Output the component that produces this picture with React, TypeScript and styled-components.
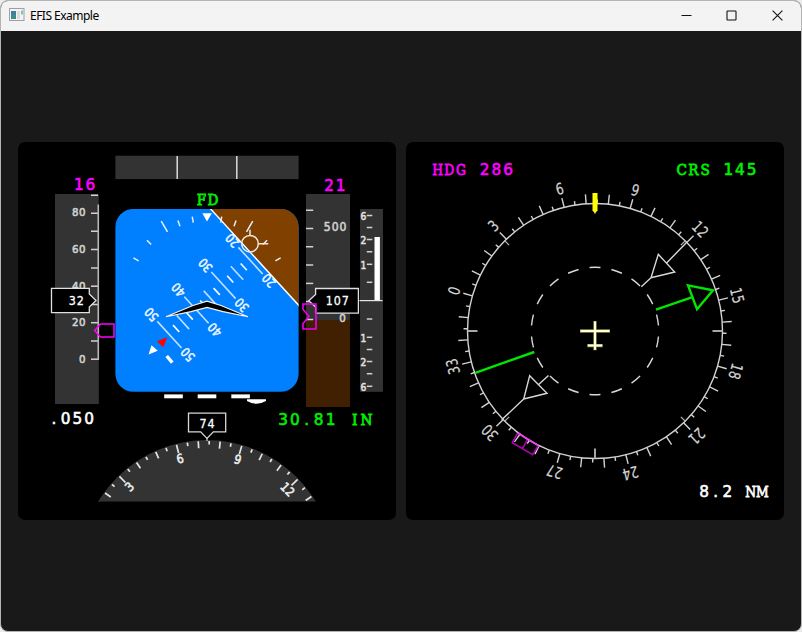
import React from "react";
import styled, { createGlobalStyle } from "styled-components";

const GlobalStyle = createGlobalStyle`
  * { box-sizing: border-box; }
  body { margin: 0; background: #ebebeb; overflow: hidden; }
`;

const Window = styled.div`
  display: flex;
  flex-direction: column;
  width: 802px;
  height: 632px;
  border: 1px solid #b4b4b4;
  border-radius: 8px;
  overflow: hidden;
  background: #191919;
`;

const TitleBar = styled.header`
  display: flex;
  align-items: center;
  flex: none;
  height: 30px;
  padding: 0 1px 0 8px;
  background: #f3f3f3;
`;

const AppIcon = styled.svg`
  flex: none;
  width: 16px;
  height: 16px;
  margin-right: 5px;
`;

const Title = styled.h1`
  flex: 1;
  margin: 0;
  font: 400 12px/30px "Noto Sans", sans-serif;
  letter-spacing: -0.52px;
  color: #000;
`;

const CaptionButton = styled.button`
  display: flex;
  align-items: center;
  justify-content: center;
  width: 45.5px;
  height: 30px;
  padding: 0 0 1px;
  border: 0;
  background: transparent;

  svg {
    width: 11px;
    height: 11px;
    fill: none;
    stroke: #111;
  }
`;

const Body = styled.main`
  display: flex;
  flex: 1;
  align-items: flex-start;
  gap: 10px;
  padding: 111px 17px 0;
`;

const Panel = styled.section`
  width: 378px;
  height: 378px;
  border-radius: 7px;
  background: #000;
  overflow: hidden;
`;

const Drawing = styled.svg`
  display: block;
  width: 378px;
  height: 378px;
`;

const Label = styled.text<{ $face?: string; $weight?: number }>`
  font-family: ${(p) => p.$face ?? '"DejaVu Sans"'}, sans-serif;
  font-weight: ${(p) => p.$weight ?? 400};
  text-anchor: middle;
  white-space: pre;
`;

const SERIF = '"DejaVu Serif"';
const GREY = "#d2d2d2";
const MAGENTA = "#ff00ff";
const GREEN = "#00f000";

type GlyphProps = {
  text: string;
  x: number;
  y: number;
  pitch: number;
  size: number;
  sx?: number;
  fill?: string;
  face?: string;
  weight?: number;
  edge?: number;
};

/* Fixed-pitch text: x is the centre of the first character, y the baseline. */
function Glyphs({ text, x, y, pitch, size, sx = 1, fill = "#fff", face, weight, edge = 0 }: GlyphProps) {
  const xs = text.split("").map((_, i) => (i * pitch) / sx).join(" ");
  return (
    <Label
      $face={face}
      $weight={weight}
      fontSize={size}
      fill={fill}
      stroke={edge ? fill : "none"}
      strokeWidth={edge}
      x={xs}
      y={0}
      transform={`translate(${x} ${y}) scale(${sx} 1)`}
    >
      {text}
    </Label>
  );
}

type ReadoutProps = { text: string; x: number; y: number; fill?: string; pitch?: number; sx?: number };
const Digits = ({ pitch = 11.7, ...p }: ReadoutProps) => <Glyphs sx={0.98} {...p} pitch={pitch} size={15.6} edge={0.6} />;
const Letters = ({ pitch = 11.7, ...p }: ReadoutProps) => <Glyphs sx={0.92} {...p} pitch={pitch} size={14.8} face={SERIF} edge={0.75} />;
const BoxDigits = (p: { text: string; x: number; y: number }) => <Glyphs {...p} pitch={8} size={12.4} sx={0.9} edge={0.3} />;

const polar = (cx: number, cy: number, r: number, deg: number) => {
  const a = (deg * Math.PI) / 180;
  return [cx + r * Math.sin(a), cy - r * Math.cos(a)];
};

type TickProps = { cx: number; cy: number; deg: number; r1: number; r2: number; color?: string; width?: number };
function Tick({ cx, cy, deg, r1, r2, color = GREY, width = 1.3 }: TickProps) {
  const [x1, y1] = polar(cx, cy, r1, deg);
  const [x2, y2] = polar(cx, cy, r2, deg);
  return <line x1={x1} y1={y1} x2={x2} y2={y2} stroke={color} strokeWidth={width} />;
}

type LadderProps = { ys: number[]; x1: number; x2: number };
const Scale = ({ ys, x1, x2 }: LadderProps) => (
  <g stroke={GREY} strokeWidth={1.5}>
    {ys.map((y) => (
      <line key={y} x1={x1} x2={x2} y1={y} y2={y} />
    ))}
  </g>
);

const ROLL = 227.6;
const PITCH = 36.1;
const PITCH_MARKS = [20, 22.5, 25, 27.5, 30, 32.5, 35, 37.5, 40, 42.5, 45, 47.5, 50];

function Attitude() {
  const ladder = { pitch: 6.8, size: 12.8, sx: 0.82, fill: "#f0f7ff", edge: 0.5 };
  return (
    <g clipPath="url(#adi)">
      <rect x={115} y={208} width={184} height={184} fill="#0080ff" />
      <path d="M210.7 209 L300 306.7 V208 H209.8 Z" fill="#804000" />
      <line x1={209.8} y1={208} x2={300} y2={306.7} stroke="#fff" strokeWidth={1.4} />
      <g transform={`translate(207 300.4) rotate(${ROLL})`}>
        {PITCH_MARKS.map((p) => {
          const y = -(p - PITCH) * 3.66;
          const main = p % 10 === 0;
          const half = main ? 18 : p % 5 === 0 ? 9.2 : 4.6;
          return (
            <g key={p}>
              <line x1={-half} x2={half} y1={y} y2={y} stroke={p % 5 ? "#fff" : "#c4e0ff"} strokeWidth={1.6} />
              {main && <Glyphs {...ladder} text={String(p)} x={-30.4} y={y + 4.7} />}
              {main && <Glyphs {...ladder} text={String(p)} x={23.6} y={y + 4.7} />}
            </g>
          );
        })}
      </g>
      {[-60, -45, -30, -20, -10, 10, 20, 30, 45, 60].map((d) => (
        <Tick key={d} cx={207} cy={300.4} deg={d} r1={79} r2={Math.abs(d) === 30 ? 91.5 : 85} color="#e6f0fa" width={1.5} />
      ))}
      <path d="M202.3 213.3 H211.8 L207 221.5 Z" fill="#fff" />
      <g fill="none" stroke="#f2e8df" strokeWidth={1.5}>
        <circle cx={250} cy={243.7} r={8.3} />
        <path d="M250 235.4 V229.7 M258.3 243.7 H268.3" />
      </g>
      <path d="M167.3 337.3 L157 341.3 L163.2 347.2 Z" fill="#f00" />
      <path d="M151.5 345.3 L148.6 354.5 L157.8 350.7 Z" fill="#fff" />
      <line x1={166.7} y1={356} x2={172.3} y2={362.7} stroke="#fff" strokeWidth={3.4} />
      <path d="M166 316.8 L193 305.6 L207 301.2 L221 305.6 L248 316.8 L223 311.6 L207 307.4 L191 311.6 Z" fill="#000" stroke="#f4f4f4" strokeWidth={1.1} />
    </g>
  );
}

function HeadingArc() {
  const headings = Array.from({ length: 24 }, (_, i) => 15 + i * 5).filter((h) => h <= 130);
  return (
    <g clipPath="url(#arc)">
      <circle cx={207} cy={567} r={127} fill="#333" />
      {headings.map((h) => {
        const d = h - 74;
        return (
          <g key={h}>
            <Tick cx={207} cy={567} deg={d} r1={h % 30 === 0 ? 117.5 : h % 10 === 0 ? 119 : 122.5} r2={126} width={1.7} color="#e6e6e6" />
            {h % 30 === 0 && (
              <g transform={`translate(207 567) rotate(${d})`}>
                <Glyphs text={String(h / 10)} x={h >= 100 ? -3.5 : 0} y={-107.4} pitch={7.2} size={12.4} sx={0.88} fill="#eee" edge={0.6} />
              </g>
            )}
          </g>
        );
      })}
    </g>
  );
}

function FlightDisplay() {
  const asiTicks = [195.2, 213.2, 231.3, 249.6, 268, 286.2, 304.5, 322.7, 341, 359.2];
  const altTicks = [210.3, 228.5, 246.8, 265, 283.4, 301.5, 319.5];
  const vsiTicks = [215.5, 227.5, 239.5, 251.7, 264.3, 282.3, 319, 337.3, 349.5, 361.5, 373.7, 386.3];
  const vsiLabels: [string, number][] = [["6", 215.5], ["2", 239.7], ["1", 264.4], ["1", 337.5], ["2", 361.8], ["6", 386.3]];
  const tape = { size: 11.2, sx: 0.92, pitch: 7.2, fill: GREY, edge: 0.6 };
  return (
    <Drawing viewBox="18 142 378 378">
      <defs>
        <clipPath id="adi"><rect x={115.4} y={209} width={183.2} height={182.8} rx={18} /></clipPath>
        <clipPath id="arc"><rect x={90} y={430} width={240} height={71.6} /></clipPath>
      </defs>

      <rect x={115.4} y={155.7} width={183.2} height={23.4} fill="#333" />
      <path d="M177.2 156 V179 M236.8 156 V179" stroke="#dcdcdc" strokeWidth={1.5} />

      <Letters text="FD" x={201.6} y={204.5} fill={GREEN} pitch={11.4} />
      <Attitude />
      <g fill="#fff">
        <rect x={164.2} y={394.4} width={18.6} height={3.9} />
        <rect x={197.7} y={394.4} width={18.6} height={3.9} />
        <rect x={231.3} y={394.4} width={18.6} height={3.9} />
        <path d="M247 399.2 H266 V401 Q256.5 406.4 247 401 Z" />
      </g>

      <rect x={55} y={194} width={43.8} height={210} fill="#333" />
      <Scale ys={asiTicks} x1={91} x2={98} />
      <line x1={98.3} x2={98.3} y1={204.5} y2={360} stroke="#b8b8b8" strokeWidth={1.6} />
      <Glyphs {...tape} text="80" x={75.2} y={216.4} />
      <Glyphs {...tape} text="60" x={75.2} y={252.9} />
      <Glyphs {...tape} text="40" x={75.2} y={289.5} />
      <Glyphs {...tape} text="20" x={75.2} y={326} />
      <Glyphs {...tape} text="0" x={82.4} y={362.5} />
      <path d="M94.7 330.5 L100.3 324 H114 V336.9 H100.3 Z" fill="none" stroke="#f0f" strokeWidth={1.5} />
      <path d="M51.5 288.4 H89.3 V294 L96 300.5 L89.3 307 V312.6 H51.5 Z" fill="#000" stroke="#e0e0e0" strokeWidth={1.3} />
      <BoxDigits text="32" x={72.3} y={304.8} />
      <Digits text="16" x={78.8} y={189.5} fill={MAGENTA} />
      <Digits text=".050" x={54} y={423.8} />

      <rect x={306} y={194} width={44} height={126} fill="#333" />
      <rect x={306} y={320} width={44} height={87} fill="#402000" />
      <Scale ys={altTicks} x1={306} x2={313.2} />
      <Glyphs {...tape} size={11.8} text="500" x={327.3} y={231.4} pitch={7.8} />
      <Glyphs {...tape} text="0" x={342.6} y={322.4} />
      <path d="M315.6 288.5 H358.4 V313.2 H315.6 V307 L308.8 300.7 L315.6 294.4 Z" fill="#000" stroke="#e0e0e0" strokeWidth={1.3} />
      <BoxDigits text="107" x={329.2} y={305} />
      <path d="M303 304 H316 V329 H303 V323.5 L309 316.5 L303 309.3 Z" fill="none" stroke="#f000f0" strokeWidth={1.6} />
      <Digits text="21" x={329} y={190.7} fill={MAGENTA} />
      <Digits text="30.81" x={283} y={424.6} fill={GREEN} pitch={11.9} />
      <Letters text="IN" x={354.7} y={424.6} fill={GREEN} pitch={11.9} />

      <rect x={360} y={209} width={23} height={182.8} fill="#333" />
      <Scale ys={vsiTicks} x1={366.8} x2={372.3} />
      {vsiLabels.map(([t, y]) => (
        <Glyphs key={y} {...tape} text={t} x={363.4} y={y + 4.2} sx={0.82} fill="#e0e0e0" />
      ))}
      <rect x={374.5} y={237} width={5.4} height={63.5} fill="#fff" />
      <line x1={359.5} x2={382.6} y1={300.6} y2={300.6} stroke="#e6e6e6" strokeWidth={1.2} />

      <HeadingArc />
      <path d="M188.5 413.2 H225.7 V431.9 H213.3 L207 438.4 L200.7 431.9 H188.5 Z" fill="#000" stroke="#d8d8d8" strokeWidth={1.3} />
      <line x1={207} x2={207} y1={438} y2={441} stroke="#d8d8d8" strokeWidth={1.2} />
      <BoxDigits text="74" x={203} y={428.2} />
    </Drawing>
  );
}

function NavDisplay() {
  const cx = 595;
  const cy = 331;
  return (
    <Drawing viewBox="406 142 378 378">
      <circle cx={cx} cy={cy} r={127.5} fill="none" stroke={GREY} strokeWidth={1.4} />
      {Array.from({ length: 72 }, (_, i) => i * 5).map((h) => (
        <Tick key={h} cx={cx} cy={cy} deg={h - 74} r1={127.5} r2={h % 10 === 0 ? 137 : 131.5} width={1.4} />
      ))}
      {Array.from({ length: 8 }, (_, i) => i * 45).map((d) => (
        <Tick key={d} cx={cx} cy={cy} deg={d} r1={d % 90 === 0 ? 117.5 : 121.5} r2={127.5} color="#b0b0b0" width={d % 90 === 0 ? 1.9 : 1.3} />
      ))}
      {Array.from({ length: 12 }, (_, i) => i * 30).map((h) => (
        <g key={h} transform={`translate(${cx} ${cy}) rotate(${h - 74})`}>
          <Glyphs text={String(h / 10)} x={h >= 100 ? -4 : 0} y={-140.8} pitch={8} size={15.8} sx={0.77} fill="#d4d4d4" edge={0.2} />
        </g>
      ))}
      <circle cx={cx} cy={cy} r={63.7} fill="none" stroke="#d8d8d8" strokeWidth={1.4} pathLength={360} strokeDasharray="10 10" strokeDashoffset={-5} />

      <g fill="none" stroke="#d8d8d8" strokeWidth={1.4}>
        <path d="M687 242 L666.6 263 M658.3 254.3 L674.7 272 L651 277.7 Z M651 277.7 L641.3 286.7" />
        <path d="M548.5 375.4 L538.4 384.7 M529.7 375.7 L547 393.3 L523.7 399 Z M523.7 399 L501.7 419.8" />
      </g>
      <g fill="none" stroke="#00e600" strokeWidth={2.4}>
        <path d="M656 309.7 L691.7 297.3 M534.3 352 L475.3 372.8" />
        <path d="M688 285.4 L713 290.2 L697 309.2 Z" />
      </g>

      <path d="M517.7 433 L512.3 442.6 L532.7 454.6 L538.3 445.5 M527.7 439.3 L522.3 448.6" fill="none" stroke="#b400b4" strokeWidth={1.6} />
      <path d="M517.7 433 L538.3 445.5" stroke="#f03cf0" strokeWidth={1.7} />

      <path d="M592.5 193 H597.5 V210.5 L596 212.3 H594 L592.5 210.5 Z" fill="#ff0" />
      <path d="M580 331 H610 M595 321 V350.3 M587.3 345.6 H602.7" stroke="#8c8c50" strokeWidth={3.4} />
      <path d="M580.5 331 H609.5 M595 321.5 V349.8 M587.8 345.6 H602.2" stroke="#ffffd2" strokeWidth={2} />

      <Letters text="HDG" x={437.6} y={174.5} fill={MAGENTA} sx={0.84} />
      <Digits text="286" x={484.6} y={174.5} fill={MAGENTA} />
      <Letters text="CRS" x={681.7} y={174.5} fill={GREEN} />
      <Digits text="145" x={728.3} y={174.5} fill={GREEN} />
      <Digits text="8.2" x={704} y={496.7} />
      <Letters text="NM" x={750.7} y={496.7} sx={0.84} />
    </Drawing>
  );
}

export default function App() {
  return (
    <>
      <GlobalStyle />
      <Window>
        <TitleBar>
          <AppIcon viewBox="0 0 16 16">
            <rect x={0.5} y={0.5} width={14.5} height={12} fill="#f4f4f4" stroke="#9a9fa8" />
            <rect x={2} y={3} width={5} height={8} fill="#3c8f86" />
            <rect x={2} y={3} width={5} height={3} fill="#4a78a8" />
            <rect x={8} y={3} width={3} height={8} fill="#dcdcdc" />
            <rect x={12} y={2.5} width={2} height={4} fill="#8fc0b8" />
          </AppIcon>
          <Title>EFIS Example</Title>
          <CaptionButton aria-label="Minimize">
            <svg viewBox="0 0 11 11"><path d="M0.5 5.5 H10.5" /></svg>
          </CaptionButton>
          <CaptionButton aria-label="Maximize">
            <svg viewBox="0 0 11 11"><rect x={1} y={1} width={9} height={9} rx={0.6} strokeWidth={1.1} /></svg>
          </CaptionButton>
          <CaptionButton aria-label="Close">
            <svg viewBox="0 0 11 11"><path d="M0.6 0.6 L10.4 10.4 M10.4 0.6 L0.6 10.4" strokeWidth={1.1} /></svg>
          </CaptionButton>
        </TitleBar>
        <Body>
          <Panel><FlightDisplay /></Panel>
          <Panel><NavDisplay /></Panel>
        </Body>
      </Window>
    </>
  );
}
